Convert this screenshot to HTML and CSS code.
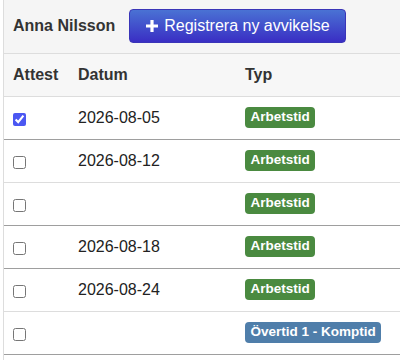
FILE: index.html
```html
<!DOCTYPE html>
<html lang="sv">
<head>
  <meta charset="UTF-8">
  <meta name="viewport" content="width=device-width, initial-scale=1.0">
  <title>Avvikelser</title>
  <link rel="stylesheet" href="styles.css">
</head>
<body>
  <div class="panel">
    <div class="panel-header">
      <span class="person-name">Anna Nilsson</span>
      <button class="btn btn-primary">
        <svg class="icon-plus" width="12" height="12" viewBox="0 0 12 12"><path d="M4.4 0h3.2v4.4H12v3.2H7.6V12H4.4V7.6H0V4.4h4.4z" fill="#fff"/></svg>
        Registrera ny avvikelse
      </button>
    </div>
    <table class="report-table">
      <thead>
        <tr>
          <th class="col-attest">Attest</th>
          <th class="col-date">Datum</th>
          <th>Typ</th>
        </tr>
      </thead>
      <tbody>
        <tr class="week-end">
          <td><input type="checkbox" checked></td>
          <td class="date">2026-08-05</td>
          <td><span class="label label-work">Arbetstid</span></td>
        </tr>
        <tr>
          <td><input type="checkbox"></td>
          <td class="date">2026-08-12</td>
          <td><span class="label label-work">Arbetstid</span></td>
        </tr>
        <tr class="week-end">
          <td><input type="checkbox"></td>
          <td class="date"></td>
          <td><span class="label label-work">Arbetstid</span></td>
        </tr>
        <tr class="week-end">
          <td><input type="checkbox"></td>
          <td class="date">2026-08-18</td>
          <td><span class="label label-work">Arbetstid</span></td>
        </tr>
        <tr>
          <td><input type="checkbox"></td>
          <td class="date">2026-08-24</td>
          <td><span class="label label-work">Arbetstid</span></td>
        </tr>
        <tr class="week-end">
          <td><input type="checkbox"></td>
          <td class="date"></td>
          <td><span class="label label-overtime">Övertid 1 - Komptid</span></td>
        </tr>
      </tbody>
    </table>
  </div>
</body>
</html>
```

FILE: styles.css
```css
*{
  margin: 0;
  padding: 0;
  box-sizing: border-box;
}

body{
  font-family: "Liberation Sans", Arial, sans-serif;
  font-size: 16px;
  color: #333;
  background-color: #fff;
}

.panel{
  margin-left: 3px;
  border-left: 1px solid #ddd;
  min-height: 360px;
}

.panel-header{
  display: flex;
  align-items: center;
  gap: 14px;
  height: 54px;
  padding: 0 9px;
  padding-bottom: 2px;
  background-color: #f5f5f5;
  border-bottom: 1px solid #ddd;
}

.person-name{
  font-weight: bold;
  color: #333;
}

.btn{
  display: flex;
  align-items: center;
  gap: 6px;
  height: 34px;
  padding: 0 15px 0 16px;
  border: 1px solid #3a35b8;
  border-radius: 4px;
  font-family: inherit;
  font-size: 16px;
  cursor: pointer;
}

.btn-primary{
  color: #fff;
  background-image: linear-gradient(to bottom, #4a72d4 0%, #3a2ec4 100%);
}

.icon-plus{
  display: block;
}

.report-table{
  width: 100%;
  border-collapse: collapse;
}

.report-table th{
  height: 42px;
  padding: 0 9px;
  text-align: left;
  font-weight: bold;
  background-color: #f7f7f7;
  border-bottom: 1px solid #ddd;
}

.report-table td{
  height: 43px;
  padding: 0 9px;
  vertical-align: middle;
  border-bottom: 1px solid #ddd;
}

.report-table tr.week-end td{
  border-bottom-color: #9e9e9e;
}

.col-attest{
  width: 65px;
}

.col-date{
  width: 167px;
}

.date{
  color: #222;
}

input[type="checkbox"]{
  display: block;
  width: 13px;
  height: 13px;
  margin-top: 4px;
  accent-color: #4b57f2;
}

.label{
  display: inline-block;
  padding: 3px 5.5px 4px;
  font-size: 13.5px;
  line-height: 14px;
  font-weight: bold;
  color: #fff;
  border-radius: 4px;
}

.label-work{
  background-color: #4a8a40;
}

.label-overtime{
  background-color: #4f7eaa;
}
```
